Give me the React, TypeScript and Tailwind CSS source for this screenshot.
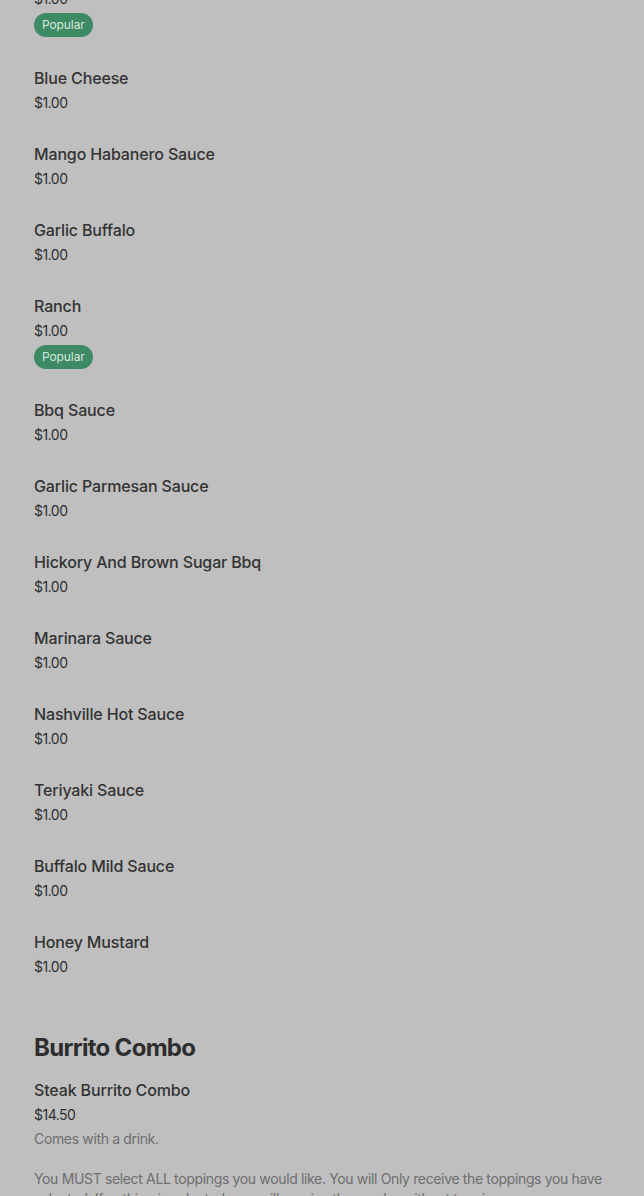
import React from "react";

type Item = { name: string; price: string; popular?: boolean };

const sauces: Item[] = [
  { name: "Hot Sauce", price: "$1.00", popular: true },
  { name: "Blue Cheese", price: "$1.00" },
  { name: "Mango Habanero Sauce", price: "$1.00" },
  { name: "Garlic Buffalo", price: "$1.00" },
  { name: "Ranch", price: "$1.00", popular: true },
  { name: "Bbq Sauce", price: "$1.00" },
  { name: "Garlic Parmesan Sauce", price: "$1.00" },
  { name: "Hickory And Brown Sugar Bbq", price: "$1.00" },
  { name: "Marinara Sauce", price: "$1.00" },
  { name: "Nashville Hot Sauce", price: "$1.00" },
  { name: "Teriyaki Sauce", price: "$1.00" },
  { name: "Buffalo Mild Sauce", price: "$1.00" },
  { name: "Honey Mustard", price: "$1.00" },
];

const MenuRow = ({ item }: { item: Item }) => (
  <div className="pt-[14px] pb-[15px]">
    <div className="text-[16px] leading-6 font-medium tracking-[-0.15px] text-[#333333]">{item.name}</div>
    <div className="mt-[3px] text-[14px] leading-5 tracking-[-0.5px] text-[#2f2f2f]">{item.price}</div>
    {item.popular && (
      <div className="mt-1 inline-flex h-6 items-center rounded-full bg-[#3e8a64] px-2 text-[12px] tracking-[-0.1px] text-[#d6e9dc]">
        Popular
      </div>
    )}
  </div>
);

export default function App() {
  return (
    <div
      className="min-h-screen overflow-hidden bg-[#bfbfbf] px-[34px]"
      style={{ fontFamily: "Inter, 'Noto Sans', sans-serif" }}
    >
      {/* list is scrolled, first row starts above the viewport */}
      <div className="-mt-[52px]">
        {sauces.map((s) => (
          <MenuRow key={s.name} item={s} />
        ))}
      </div>

      <section className="mt-10">
        <h2 className="text-[24px] leading-8 font-bold tracking-[-0.7px] text-[#2e2e2e]">
          Burrito Combo
        </h2>
        <div className="mt-[14px]">
          <div className="text-[16px] leading-6 font-medium tracking-[-0.15px] text-[#333333]">Steak Burrito Combo</div>
          <div className="mt-[3px] text-[14px] leading-5 tracking-[-0.5px] text-[#2f2f2f]">$14.50</div>
          <div className="mt-1 text-[14px] leading-5 tracking-[-0.35px] text-[#6e6e6e]">Comes with a drink.</div>
          <p className="mt-5 text-[14px] leading-5 tracking-[-0.35px] text-[#6e6e6e]">
            You MUST select ALL toppings you would like. You will Only receive the toppings you have
            selected. If nothing is selected, you will receive the combo without toppings.
          </p>
        </div>
      </section>
    </div>
  );
}
